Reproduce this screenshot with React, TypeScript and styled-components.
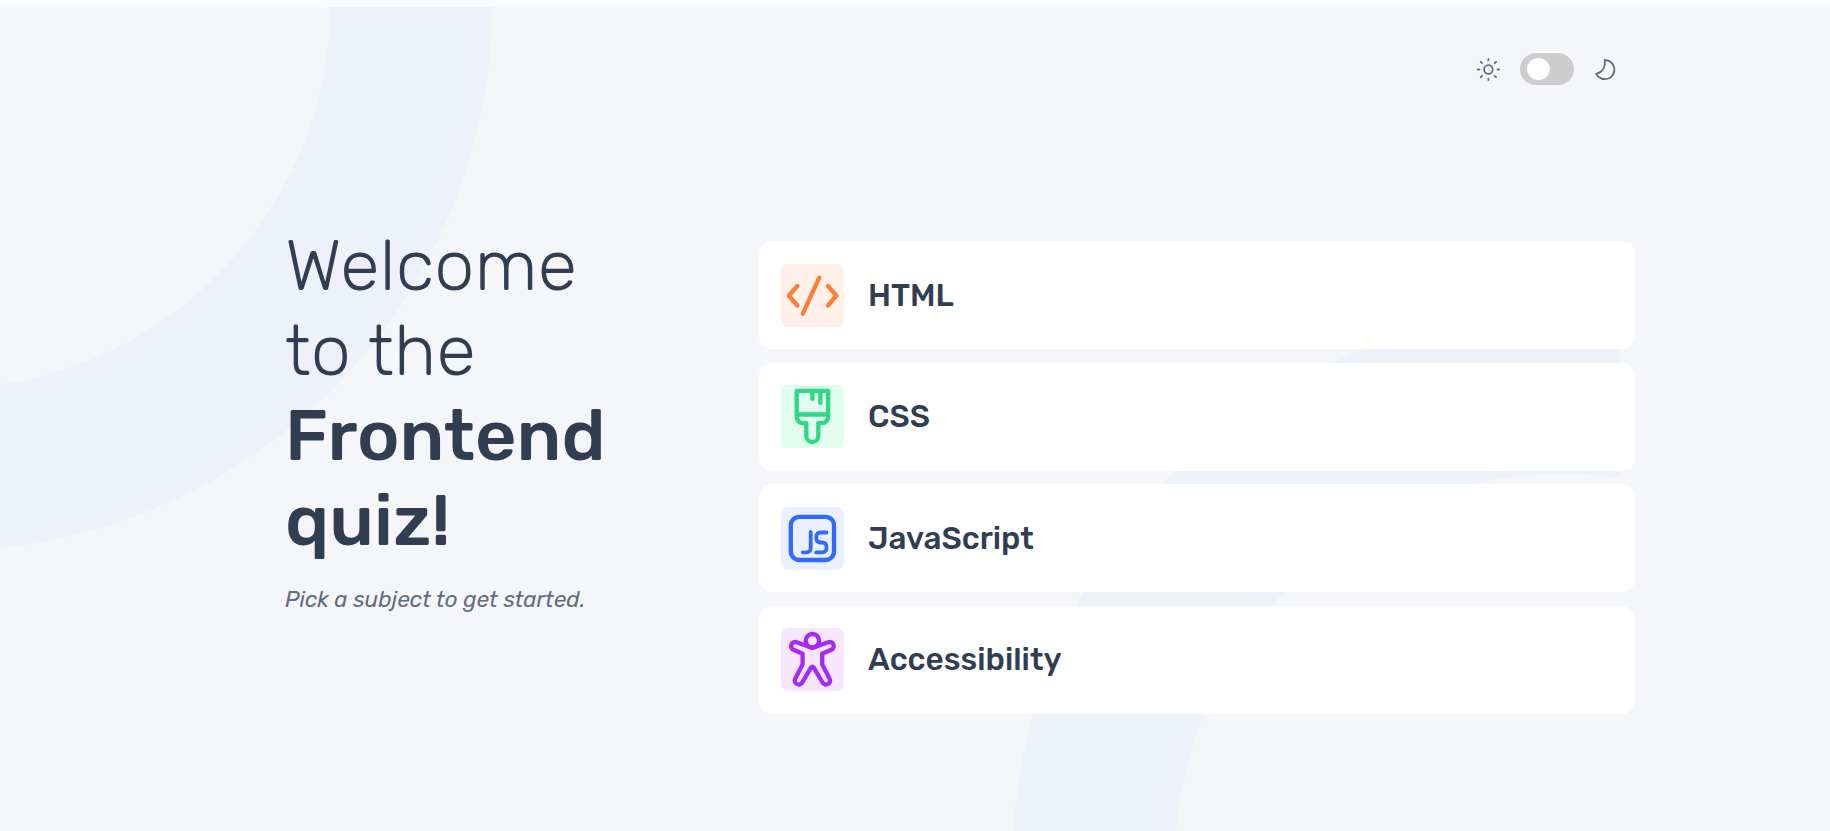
import React, { useState } from "react";
import styled, { createGlobalStyle } from "styled-components";

const GlobalStyle = createGlobalStyle`
  *, *::before, *::after { box-sizing: border-box; }
  body {
    margin: 0;
    background: #f9faff;
    font-family: Rubik, Roboto, "Liberation Sans", sans-serif;
    color: #313e51;
  }
`;

const Page = styled.div`
  height: 100vh;
  padding-top: 7px;
  overflow: hidden;
`;

const Screen = styled.main`
  position: relative;
  display: flex;
  flex-direction: column;
  height: 100%;
  padding: 46px 195px 0 285px;
  background: #f4f6fa;
`;

const Pattern = styled.svg`
  position: absolute;
  top: 0;
  left: 0;
  width: 1620px;
  height: 824px;
`;

const Header = styled.header`
  position: relative;
  display: flex;
  justify-content: flex-end;
  align-items: center;
  height: 32px;
  padding-right: 16px;
`;

const ThemeIcon = styled.svg`
  width: 27px;
  height: 27px;
  fill: none;
  stroke: #626c7f;
  stroke-width: 1.8;
  stroke-linecap: round;
  stroke-linejoin: round;
`;

const Switch = styled.button`
  display: flex;
  align-items: center;
  width: 54px;
  height: 32px;
  margin: 0 18px;
  padding: 0 7px;
  border: 0;
  border-radius: 16px;
  background: #ccc;
  cursor: pointer;
`;

const Knob = styled.span<{ $on: boolean }>`
  width: 23px;
  height: 22px;
  border-radius: 50%;
  background: #fff;
  transform: translateX(${(p) => (p.$on ? 17 : 0)}px);
`;

const Content = styled.div`
  position: relative;
  display: grid;
  grid-template-columns: 474px 876px;
  margin-top: 156px;
`;

const Intro = styled.section`
  margin-top: -18px;
`;

const Title = styled.h1`
  margin: 0;
  font-size: 72px;
  line-height: 85px;
  font-weight: 300;
`;

const Line = styled.span<{ $bold?: boolean }>`
  display: block;
  white-space: nowrap;
  font-weight: ${(p) => (p.$bold ? 500 : 300)};
`;

const Hint = styled.p`
  margin: 20px 0 0;
  font-size: 22.5px;
  line-height: 34px;
  font-style: italic;
  color: #626c7f;
`;

const Subjects = styled.ul`
  display: flex;
  flex-direction: column;
  gap: 13.6px;
  margin: 0;
  padding: 0;
  list-style: none;
`;

const Subject = styled.li`
  display: flex;
  align-items: center;
  gap: 24px;
  height: 108px;
  padding: 0 22px;
  border-radius: 13.5px;
  background: #fff;
  cursor: pointer;
`;

const Tile = styled.svg<{ $bg: string; $ink: string }>`
  width: 63px;
  height: 63px;
  border-radius: 7px;
  background: ${(p) => p.$bg};
  fill: none;
  stroke: ${(p) => p.$ink};
  stroke-width: 4.3;
  stroke-linecap: round;
  stroke-linejoin: round;
`;

const Label = styled.span`
  padding-top: 1px;
  font-size: 31.5px;
  line-height: 38px;
  font-weight: 500;
`;

const subjects = [
  {
    name: "HTML", bg: "#fff1e9", ink: "#ff7e35",
    art: <path d="M16.3 22 7.9 31.7l8.4 9.8M47 22l8.4 9.7L47 41.5M38.3 13.7 21.8 49.7" />,
  },
  {
    name: "CSS", bg: "#e0fdef", ink: "#2fd887",
    art: (
      <path d="M15.7 5.9h31.4v26a6.3 6.3 0 0 1-6.3 6.3h-3.5v12.9a6 6 0 0 1-12 0V38.2h-3.3a6.3 6.3 0 0 1-6.3-6.3ZM15.7 29.5h31.4M31.4 5.9v8M39.4 5.9v12" />
    ),
  },
  {
    name: "JavaScript", bg: "#ebf0ff", ink: "#306aff",
    art: (
      <>
        <rect x="9.8" y="9.8" width="43.2" height="43.2" rx="8.5" />
        <path strokeWidth="3.8" d="M29.7 25v16.2a4.2 4.2 0 0 1-4.2 4.2h-3.7M45.5 25.5h-6.2a4 4 0 0 0-4 4v2a4 4 0 0 0 4 4h2.2a4 4 0 0 1 4 4v1.9a4 4 0 0 1-4 4h-6.3" />
      </>
    ),
  },
  {
    name: "Accessibility", bg: "#f6e7ff", ink: "#a729f5",
    art: (
      <>
        <circle cx="31.4" cy="12.7" r="6.7" />
        <path d="M31.4 20.1 15.7 14.3a4 4 0 0 0-3.1 7.5L21.6 25.8v10.7L14.3 50.5a4 4 0 0 0 7 4L30 39.6q1.4-1.8 2.8 0L41.5 54.5a4 4 0 0 0 7-4L41.2 36.5V25.8L50.2 21.8a4 4 0 0 0-3.1-7.5Z" />
      </>
    ),
  },
];

export default function App() {
  const [dark, setDark] = useState(false);
  return (
    <Page>
      <GlobalStyle />
      <Screen>
        <Pattern viewBox="0 0 1620 824" fill="none" stroke="#ecf1fa" strokeWidth="162" aria-hidden>
          <circle cx="-57" cy="-5.5" r="468.5" />
          <circle cx="1562.5" cy="854.4" r="468.5" />
        </Pattern>
        <Header>
          <ThemeIcon viewBox="0 0 27 27">
            <circle cx="13.4" cy="13.5" r="4.3" />
            <path d="M13.4 2.9v1.5M13.4 22.6v1.5M2.7 13.5h1.6M22.5 13.5h1.6M5.7 5.8l1.4 1.4M19.7 19.8l1.4 1.4M5.7 21.2l1.4-1.4M19.7 7.2l1.4-1.4" />
          </ThemeIcon>
          <Switch aria-label="Toggle dark mode" onClick={() => setDark(!dark)}>
            <Knob $on={dark} />
          </Switch>
          <ThemeIcon viewBox="0 0 27 27">
            <path d="M12.8 4a9.6 9.6 0 1 1-8.6 13.8C10 16.5 13.5 11.5 12.8 4Z" />
          </ThemeIcon>
        </Header>
        <Content>
          <Intro>
            <Title>
              <Line>Welcome</Line>
              <Line>to the</Line>
              <Line $bold>Frontend</Line>
              <Line $bold>quiz!</Line>
            </Title>
            <Hint>Pick a subject to get started.</Hint>
          </Intro>
          <Subjects>
            {subjects.map((s) => (
              <Subject key={s.name}>
                <Tile viewBox="0 0 63 63" $bg={s.bg} $ink={s.ink}>{s.art}</Tile>
                <Label>{s.name}</Label>
              </Subject>
            ))}
          </Subjects>
        </Content>
      </Screen>
    </Page>
  );
}
